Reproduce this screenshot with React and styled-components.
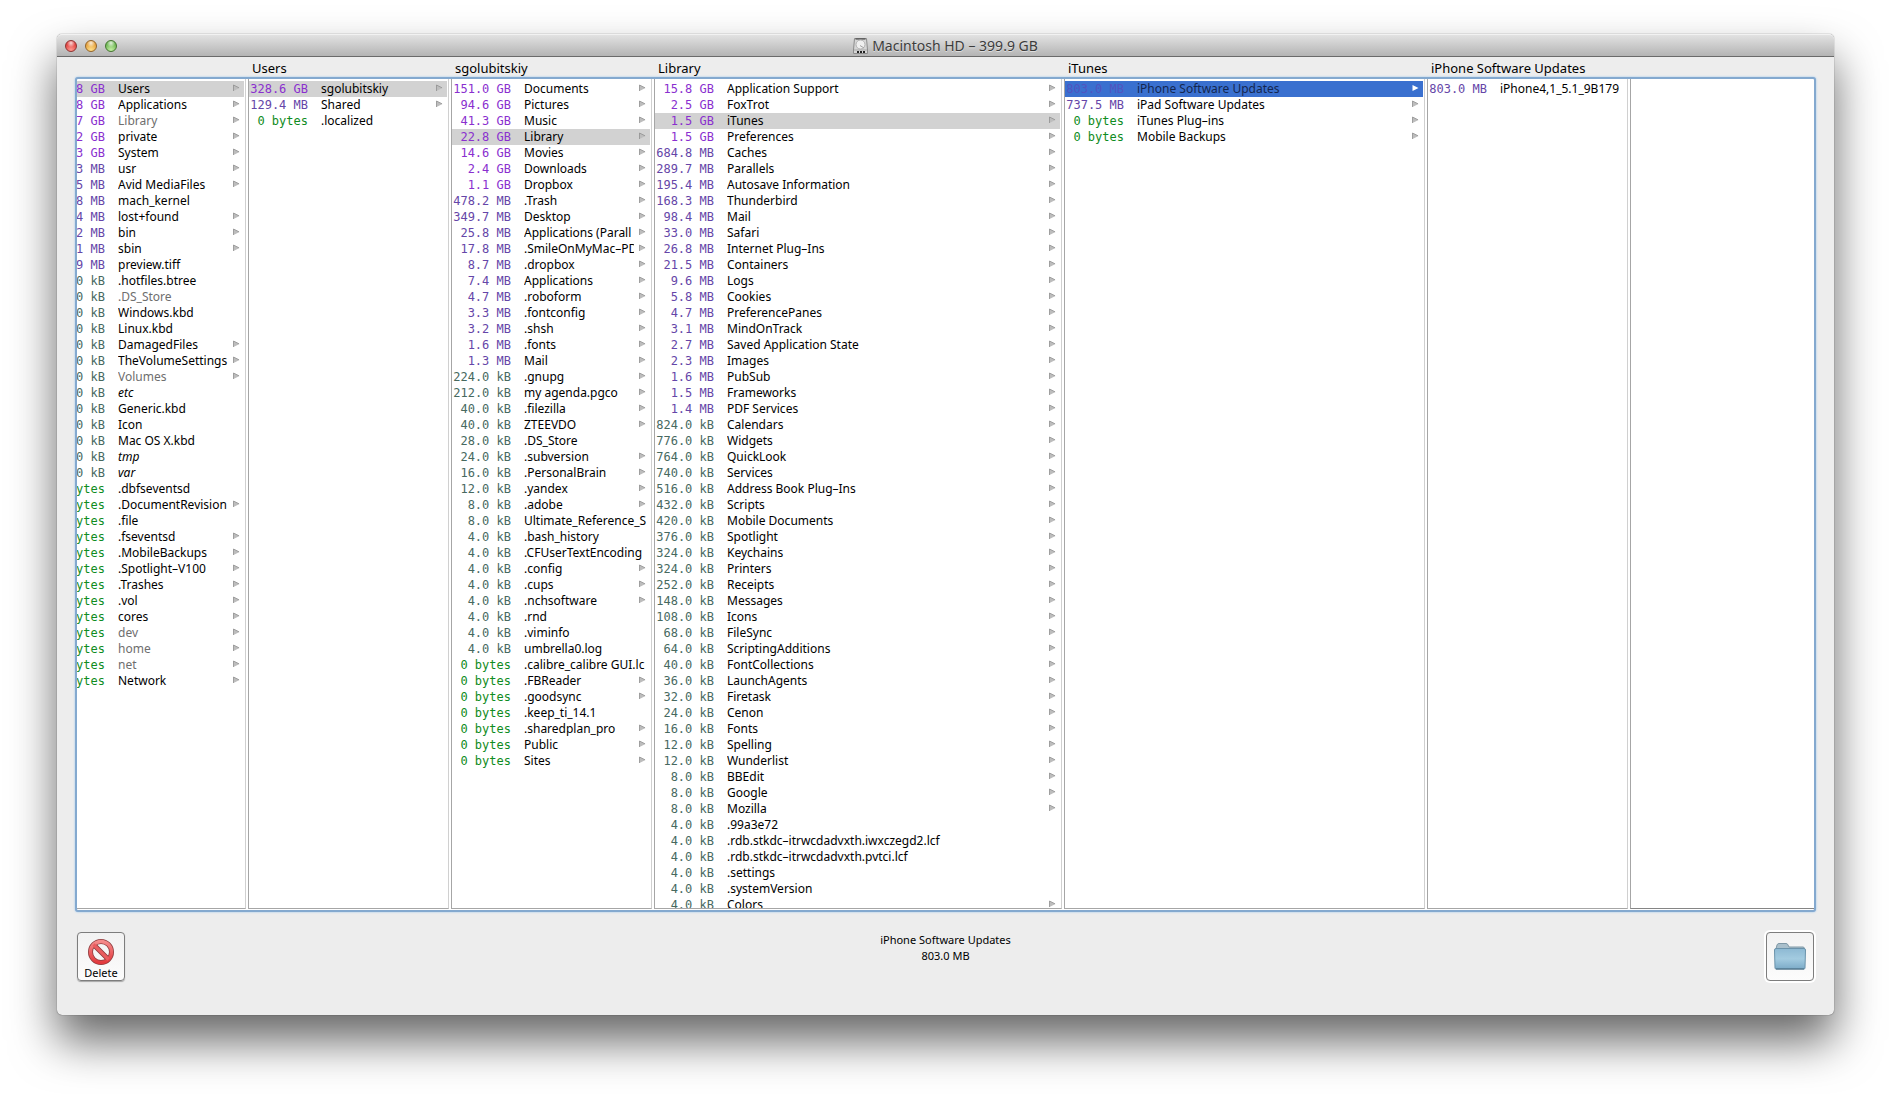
import React, {useState} from 'react';
import styled, {createGlobalStyle, css} from 'styled-components';

const GlobalStyle = createGlobalStyle`
  * {
    box-sizing: border-box;
  }

  body {
    margin: 0;
    background-color: #fff;
    font-family: "Noto Sans", "Open Sans", sans-serif;
    color: #000;
  }

  ul {
    margin: 0;
    padding: 0;
    list-style: none;
  }

  button {
    font-family: inherit;
    color: inherit;
    cursor: pointer;
  }
`;

const Desktop = styled.div`
  display: flex;
  height: 100vh;
  padding: 34px 57px 79px;
`;

const Window = styled.main`
  display: flex;
  flex-direction: column;
  flex-grow: 1;
  min-width: 0;
  background-color: #ededed;
  border-radius: 5px;
  box-shadow: 0 0 1px rgba(0, 0, 0, 0.8), 0 26px 46px rgba(0, 0, 0, 0.6);
`;

const TitleBar = styled.header`
  display: grid;
  grid-template-columns: 1fr auto 1fr;
  align-items: center;
  height: 23px;
  flex-shrink: 0;
  padding: 0 8px;
  border-top: 1px solid #f2f2f2;
  border-bottom: 1px solid #6a6a6a;
  border-radius: 5px 5px 0 0;
  background: linear-gradient(#e2e2e2, #b4b4b4);
`;

const Lights = styled.div`
  display: flex;
  gap: 8px;
`;

const Light = styled.button`
  width: 12px;
  height: 12px;
  padding: 0;
  border: 1px solid ${({$edge}) => $edge};
  border-radius: 50%;
  background: radial-gradient(circle at 50% 20%, rgba(255, 255, 255, 0.8), transparent 45%),
    radial-gradient(circle at 50% 90%, ${({$glow}) => $glow}, ${({$color}) => $color} 70%);
`;

const Title = styled.h1`
  display: flex;
  align-items: center;
  gap: 4px;
  margin: 0;
  font-size: 14px;
  font-weight: 400;
  line-height: 20px;
  color: #3c3c3c;
  text-shadow: 0 1px 0 rgba(255, 255, 255, 0.5);
`;

const Body = styled.section`
  display: flex;
  flex-direction: column;
  flex-grow: 1;
  min-height: 0;
  padding: 0 18px 34px;
`;

const Headings = styled.div`
  display: flex;
  height: 20px;
  flex-shrink: 0;
  padding: 0 2px;
`;

const Heading = styled.h2`
  width: ${({$width}) => $width}px;
  flex-shrink: 0;
  margin: 0;
  padding-left: 5px;
  font-size: 13px;
  font-weight: 400;
  line-height: 22px;
  white-space: nowrap;
`;

const Browser = styled.div`
  display: flex;
  flex-grow: 1;
  min-height: 0;
  padding-bottom: 1px;
  background-color: #fff;
  border: 2px solid #84a9cf;
  border-radius: 3px;
  box-shadow: 0 0 2px #8fc0f0;
  overflow: hidden;
`;

const Column = styled.ul`
  width: ${({$width}) => $width}px;
  flex-shrink: 0;
  padding: 2px 1px 0 0;
  overflow: hidden;
  border-right: 1px solid #d0d0d0;
  border-bottom: 1px solid #a6a6a6;

  & + & {
    margin-left: 2px;
    border-left: 1px solid #a6a6a6;
  }
`;

const Preview = styled.div`
  flex-grow: 1;
  margin-left: 2px;
  border-left: 1px solid #a6a6a6;
  border-bottom: 1px solid #858585;
`;

const sizeColors = {
    GB: '#8a2fcf',
    MB: '#6546a8',
    kB: '#47695f',
    es: '#0f8c22',
};

const Size = styled.span`
  display: flex;
  justify-content: flex-end;
  width: ${({$cut}) => ($cut ? 28 : 59)}px;
  flex-shrink: 0;
  overflow: hidden;
  font-family: "DejaVu Sans Mono", monospace;
  font-size: 12px;
  white-space: pre;
  color: ${({$unit}) => sizeColors[$unit]};
`;

const Name = styled.span`
  flex-grow: 1;
  min-width: 0;
  margin-left: 13px;
  overflow: hidden;
  font-size: 12px;
  text-align: left;
  white-space: nowrap;
`;

const Row = styled.button`
  display: flex;
  align-items: center;
  width: 100%;
  height: 16px;
  padding: 0;
  border: none;
  background-color: transparent;
  line-height: 16px;

  ${({$look}) => $look === 'dim' && css`
    ${Name} {
      color: #6e6e6e;
    }
  `}

  ${({$look}) => $look === 'link' && css`
    ${Name} {
      font-style: italic;
    }
  `}

  ${({$state}) => $state === 'open' && css`
    background-color: #d2d2d2;
  `}

  ${({$state}) => $state === 'active' && css`
    background-color: #3a70cf;

    ${Size} {
      color: #5154c0;
    }

    ${Name} {
      color: #14264f;
    }
  `}
`;

const Arrow = styled.svg`
  width: 7px;
  height: 8px;
  flex-shrink: 0;
  margin: 0 4px 2px 5px;
`;

const Footer = styled.footer`
  display: flex;
  align-items: flex-start;
  justify-content: space-between;
  margin-top: 20px;
  padding: 0 2px;
`;

const ToolButton = styled.button`
  display: flex;
  flex-direction: column;
  align-items: center;
  justify-content: center;
  width: 48px;
  height: 49px;
  padding: ${({$labelled}) => ($labelled ? '4px 0 0' : '0')};
  border: 1px solid #7d7d7d;
  border-radius: 4px;
  background: linear-gradient(#f2f2f2, #fcfcfc);
  font-size: 11px;
  line-height: 13px;
  box-shadow: ${({$pressed}) => ($pressed ? '0 0 0 2px #fff' : '0 1px 1px rgba(0, 0, 0, 0.3)')};
`;

const Status = styled.p`
  margin: 0;
  font-size: 11px;
  line-height: 16px;
  text-align: center;
`;

// each entry: size|name|flags, where ">" is a folder, "d" is dimmed, "i" is a symlink
const parse = (text) => text.trim().split('\n').map((line) => {
    const [size, name, flags = ''] = line.trim().split('|');
    return {
        size,
        name,
        unit: size.slice(-2),
        folder: flags.includes('>'),
        look: flags.includes('d') ? 'dim' : flags.includes('i') ? 'link' : 'plain',
    };
});

const columns = [
    {
        title: '',
        width: 169,
        cut: true,
        selected: 'Users',
        items: parse(`
            8 GB|Users|>
            8 GB|Applications|>
            7 GB|Library|>d
            2 GB|private|>
            3 GB|System|>
            3 MB|usr|>
            5 MB|Avid MediaFiles|>
            8 MB|mach_kernel
            4 MB|lost+found|>
            2 MB|bin|>
            1 MB|sbin|>
            9 MB|preview.tiff
            0 kB|.hotfiles.btree
            0 kB|.DS_Store|d
            0 kB|Windows.kbd
            0 kB|Linux.kbd
            0 kB|DamagedFiles|>
            0 kB|TheVolumeSettings|>
            0 kB|Volumes|>d
            0 kB|etc|i
            0 kB|Generic.kbd
            0 kB|Icon
            0 kB|Mac OS X.kbd
            0 kB|tmp|i
            0 kB|var|i
            ytes|.dbfseventsd
            ytes|.DocumentRevision|>
            ytes|.file
            ytes|.fseventsd|>
            ytes|.MobileBackups|>
            ytes|.Spotlight–V100|>
            ytes|.Trashes|>
            ytes|.vol|>
            ytes|cores|>
            ytes|dev|>d
            ytes|home|>d
            ytes|net|>d
            ytes|Network|>
        `),
    },
    {
        title: 'Users',
        width: 201,
        selected: 'sgolubitskiy',
        items: parse(`
            328.6 GB|sgolubitskiy|>
            129.4 MB|Shared|>
            0 bytes|.localized
        `),
    },
    {
        title: 'sgolubitskiy',
        width: 201,
        selected: 'Library',
        items: parse(`
            151.0 GB|Documents|>
            94.6 GB|Pictures|>
            41.3 GB|Music|>
            22.8 GB|Library|>
            14.6 GB|Movies|>
            2.4 GB|Downloads|>
            1.1 GB|Dropbox|>
            478.2 MB|.Trash|>
            349.7 MB|Desktop|>
            25.8 MB|Applications (Parall|>
            17.8 MB|.SmileOnMyMac–PD|>
            8.7 MB|.dropbox|>
            7.4 MB|Applications|>
            4.7 MB|.roboform|>
            3.3 MB|.fontconfig|>
            3.2 MB|.shsh|>
            1.6 MB|.fonts|>
            1.3 MB|Mail|>
            224.0 kB|.gnupg|>
            212.0 kB|my agenda.pgco|>
            40.0 kB|.filezilla|>
            40.0 kB|ZTEEVDO|>
            28.0 kB|.DS_Store
            24.0 kB|.subversion|>
            16.0 kB|.PersonalBrain|>
            12.0 kB|.yandex|>
            8.0 kB|.adobe|>
            8.0 kB|Ultimate_Reference_S
            4.0 kB|.bash_history
            4.0 kB|.CFUserTextEncoding
            4.0 kB|.config|>
            4.0 kB|.cups|>
            4.0 kB|.nchsoftware|>
            4.0 kB|.rnd
            4.0 kB|.viminfo
            4.0 kB|umbrella0.log
            0 bytes|.calibre_calibre GUI.lc
            0 bytes|.FBReader|>
            0 bytes|.goodsync|>
            0 bytes|.keep_ti_14.1
            0 bytes|.sharedplan_pro|>
            0 bytes|Public|>
            0 bytes|Sites|>
        `),
    },
    {
        title: 'Library',
        width: 408,
        selected: 'iTunes',
        items: parse(`
            15.8 GB|Application Support|>
            2.5 GB|FoxTrot|>
            1.5 GB|iTunes|>
            1.5 GB|Preferences|>
            684.8 MB|Caches|>
            289.7 MB|Parallels|>
            195.4 MB|Autosave Information|>
            168.3 MB|Thunderbird|>
            98.4 MB|Mail|>
            33.0 MB|Safari|>
            26.8 MB|Internet Plug–Ins|>
            21.5 MB|Containers|>
            9.6 MB|Logs|>
            5.8 MB|Cookies|>
            4.7 MB|PreferencePanes|>
            3.1 MB|MindOnTrack|>
            2.7 MB|Saved Application State|>
            2.3 MB|Images|>
            1.6 MB|PubSub|>
            1.5 MB|Frameworks|>
            1.4 MB|PDF Services|>
            824.0 kB|Calendars|>
            776.0 kB|Widgets|>
            764.0 kB|QuickLook|>
            740.0 kB|Services|>
            516.0 kB|Address Book Plug–Ins|>
            432.0 kB|Scripts|>
            420.0 kB|Mobile Documents|>
            376.0 kB|Spotlight|>
            324.0 kB|Keychains|>
            324.0 kB|Printers|>
            252.0 kB|Receipts|>
            148.0 kB|Messages|>
            108.0 kB|Icons|>
            68.0 kB|FileSync|>
            64.0 kB|ScriptingAdditions|>
            40.0 kB|FontCollections|>
            36.0 kB|LaunchAgents|>
            32.0 kB|Firetask|>
            24.0 kB|Cenon|>
            16.0 kB|Fonts|>
            12.0 kB|Spelling|>
            12.0 kB|Wunderlist|>
            8.0 kB|BBEdit|>
            8.0 kB|Google|>
            8.0 kB|Mozilla|>
            4.0 kB|.99a3e72
            4.0 kB|.rdb.stkdc–itrwcdadvxth.iwxczegd2.lcf
            4.0 kB|.rdb.stkdc–itrwcdadvxth.pvtci.lcf
            4.0 kB|.settings
            4.0 kB|.systemVersion
            4.0 kB|Colors|>
        `),
    },
    {
        title: 'iTunes',
        width: 361,
        active: true,
        selected: 'iPhone Software Updates',
        items: parse(`
            803.0 MB|iPhone Software Updates|>
            737.5 MB|iPad Software Updates|>
            0 bytes|iTunes Plug–ins|>
            0 bytes|Mobile Backups|>
        `),
    },
    {
        title: 'iPhone Software Updates',
        width: 201,
        items: parse(`
            803.0 MB|iPhone4,1_5.1_9B179
        `),
    },
];

const FolderArrow = ({active}) => (
    <Arrow viewBox="0 0 7 8" aria-hidden="true">
        <path d="M0.5 1 L6.5 4 L0.5 7 Z" fill={active ? '#fff' : '#bdbdbd'}/>
        {!active && <path d="M0.5 7 V1 L6 3.8" fill="none" stroke="#8f8f8f" strokeWidth="0.8"/>}
    </Arrow>
);

const DiskIcon = () => (
    <svg width="15" height="16" viewBox="0 0 15 16" aria-hidden="true">
        <path d="M1.5 0.5 H13.5 L14.5 12 V15.5 H0.5 V12 Z" fill="#d6d6d6" stroke="#8c8c8c"/>
        <path d="M2.5 1 H12.5" stroke="#3a3a3a"/>
        <ellipse cx="7.5" cy="6.5" rx="4.5" ry="4.5" fill="#efefef" stroke="#b2b2b2"/>
        <path d="M7 7.500 L11 10" stroke="#a2a2a2"/>
        <path d="M1 12 H14" stroke="#a8a8a8"/>
        <path d="M4 14 H12.500" stroke="#222" strokeWidth="2" strokeDasharray="2 1"/>
    </svg>
);

const DeleteIcon = () => (
    <svg width="28" height="28" viewBox="0 0 28 28" aria-hidden="true">
        <defs>
            <linearGradient id="stop" x1="0" y1="0" x2="0" y2="1">
                <stop offset="0" stopColor="#f58a8a"/>
                <stop offset="1" stopColor="#e23a3e"/>
            </linearGradient>
        </defs>
        <circle cx="14" cy="14" r="10.5" fill="none" stroke="#8d3a3c" strokeWidth="5"/>
        <path d="M7 7 L21 21" stroke="#8d3a3c" strokeWidth="5"/>
        <circle cx="14" cy="14" r="10.5" fill="none" stroke="url(#stop)" strokeWidth="3.4"/>
        <path d="M6.5 6.5 L21.5 21.5" stroke="#ea5c5f" strokeWidth="3.2"/>
    </svg>
);

const FolderIcon = () => (
    <svg width="32" height="27" viewBox="0 0 32 27" aria-hidden="true">
        <defs>
            <linearGradient id="folder" x1="0" y1="0" x2="0" y2="1">
                <stop offset="0" stopColor="#8db9d3"/>
                <stop offset="0.5" stopColor="#a3cbe0"/>
                <stop offset="1" stopColor="#7cabc8"/>
            </linearGradient>
        </defs>
        <path d="M2 6 L3 2 Q3.500 0.500 5 0.500 H12 Q13.500 0.500 14 2 L15 4 H29 Q30.500 4 30.500 6 V10 H2 Z" fill="#a9bfcb" stroke="#7f98a6"/>
        <path d="M0.500 7 Q0.500 5.500 2 5.500 H30 Q31.500 5.500 31.500 7 L31 25 Q31 26 30 26 H2 Q1 26 1 25 Z" fill="url(#folder)" stroke="#6b93ab"/>
        <path d="M2 26 H30" stroke="#44687e"/>
    </svg>
);

const BrowserColumn = ({column, selected, onSelect}) => (
    <Column $width={column.width}>
        {column.items.map((item) => {
            const picked = item.name === selected;
            const active = picked && column.active;
            return (
                <li key={item.name}>
                    <Row
                        type="button"
                        $look={item.look}
                        $state={active ? 'active' : picked ? 'open' : 'none'}
                        onClick={() => onSelect(item.name)}
                    >
                        <Size $cut={column.cut} $unit={item.unit}>{item.size}</Size>
                        <Name>{item.name}</Name>
                        {item.folder && <FolderArrow active={active}/>}
                    </Row>
                </li>
            );
        })}
    </Column>
);

const App = () => {
    const [selection, setSelection] = useState(columns.map((column) => column.selected));

    const select = (index, name) => {
        setSelection(selection.map((old, i) => (i === index ? name : old)));
    };

    return (
        <Desktop>
            <GlobalStyle/>
            <Window>
                <TitleBar>
                    <Lights>
                        <Light type="button" aria-label="Close" $edge="#8e3331" $color="#e0403e" $glow="#ff9a90"/>
                        <Light type="button" aria-label="Minimize" $edge="#936428" $color="#e5a03c" $glow="#ffe08a"/>
                        <Light type="button" aria-label="Zoom" $edge="#44752f" $color="#6cb552" $glow="#c4f0a4"/>
                    </Lights>
                    <Title><DiskIcon/>Macintosh HD – 399.9 GB</Title>
                </TitleBar>
                <Body>
                    <Headings>
                        {columns.map((column, i) => (
                            <Heading key={i} $width={column.width + (i ? 2 : 1)}>{column.title}</Heading>
                        ))}
                    </Headings>
                    <Browser>
                        {columns.map((column, i) => (
                            <BrowserColumn
                                key={i}
                                column={column}
                                selected={selection[i]}
                                onSelect={(name) => select(i, name)}
                            />
                        ))}
                        <Preview/>
                    </Browser>
                    <Footer>
                        <ToolButton type="button" $labelled><DeleteIcon/>Delete</ToolButton>
                        <Status>iPhone Software Updates<br/>803.0 MB</Status>
                        <ToolButton type="button" aria-label="Show in Finder" $pressed><FolderIcon/></ToolButton>
                    </Footer>
                </Body>
            </Window>
        </Desktop>
    );
};

export default App;
